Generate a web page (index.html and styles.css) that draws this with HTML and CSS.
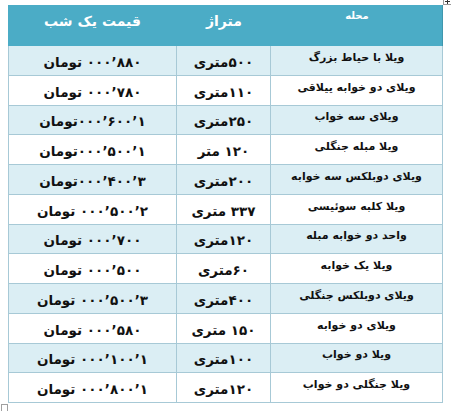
FILE: index.html
```html
<!DOCTYPE html>
<html lang="fa">
<head>
<meta charset="utf-8">
<link rel="stylesheet" href="styles.css">
</head>
<body>
<div class="page">
  <span class="move-handle"></span>
  <div class="table">
    <div class="row head">
      <div class="cell price"><span class="t">قیمت یک شب</span></div>
      <div class="cell area"><span class="t">متراژ</span></div>
      <div class="cell name small"><span class="t">محله</span></div>
    </div>
    <div class="row shade">
      <div class="cell price"><span class="t">۸۸۰’۰۰۰ تومان</span></div>
      <div class="cell area"><span class="t">۵۰۰متری</span></div>
      <div class="cell name"><span class="t">ویلا با حیاط بزرگ</span></div>
    </div>
    <div class="row">
      <div class="cell price"><span class="t">۷۸۰’۰۰۰ تومان</span></div>
      <div class="cell area"><span class="t">۱۱۰متری</span></div>
      <div class="cell name"><span class="t">ویلای دو خوابه ییلاقی</span></div>
    </div>
    <div class="row shade">
      <div class="cell price"><span class="t">۱’۶۰۰’۰۰۰تومان</span></div>
      <div class="cell area"><span class="t">۲۵۰متری</span></div>
      <div class="cell name"><span class="t">ویلای سه خواب</span></div>
    </div>
    <div class="row">
      <div class="cell price"><span class="t">۱’۵۰۰’۰۰۰تومان</span></div>
      <div class="cell area"><span class="t">۱۲۰ متر</span></div>
      <div class="cell name"><span class="t">ویلا مبله جنگلی</span></div>
    </div>
    <div class="row shade">
      <div class="cell price"><span class="t">۳’۴۰۰’۰۰۰تومان</span></div>
      <div class="cell area"><span class="t">۲۰۰متری</span></div>
      <div class="cell name"><span class="t">ویلای دوبلکس سه خوابه</span></div>
    </div>
    <div class="row">
      <div class="cell price"><span class="t">۲’۵۰۰’۰۰۰ تومان</span></div>
      <div class="cell area"><span class="t">۳۳۷ متری</span></div>
      <div class="cell name"><span class="t">ویلا کلبه سوئیسی</span></div>
    </div>
    <div class="row shade">
      <div class="cell price"><span class="t">۷۰۰’۰۰۰ تومان</span></div>
      <div class="cell area"><span class="t">۱۲۰متری</span></div>
      <div class="cell name"><span class="t">واحد دو خوابه مبله</span></div>
    </div>
    <div class="row">
      <div class="cell price"><span class="t">۵۰۰’۰۰۰ تومان</span></div>
      <div class="cell area"><span class="t">۶۰متری</span></div>
      <div class="cell name"><span class="t">ویلا یک خوابه</span></div>
    </div>
    <div class="row shade">
      <div class="cell price"><span class="t">۳’۵۰۰’۰۰۰ تومان</span></div>
      <div class="cell area"><span class="t">۴۰۰متری</span></div>
      <div class="cell name"><span class="t">ویلای دوبلکس جنگلی</span></div>
    </div>
    <div class="row">
      <div class="cell price"><span class="t">۵۸۰’۰۰۰ تومان</span></div>
      <div class="cell area"><span class="t">۱۵۰ متری</span></div>
      <div class="cell name"><span class="t">ویلای دو خوابه</span></div>
    </div>
    <div class="row shade">
      <div class="cell price"><span class="t">۱’۱۰۰’۰۰۰ تومان</span></div>
      <div class="cell area"><span class="t">۱۰۰متری</span></div>
      <div class="cell name"><span class="t">ویلا دو خواب</span></div>
    </div>
    <div class="row">
      <div class="cell price"><span class="t">۱’۸۰۰’۰۰۰ تومان</span></div>
      <div class="cell area"><span class="t">۱۲۰متری</span></div>
      <div class="cell name"><span class="t">ویلا جنگلی دو خواب</span></div>
    </div>
  </div>
  <span class="end-mark"></span>
</div>
</body>
</html>
```

FILE: styles.css
```css
html, body {
  margin: 0;
  padding: 0;
  background: #ffffff;
}

.page {
  position: relative;
  width: 451px;
  height: 411px;
  padding: 5px 0 0 8px;
  box-sizing: border-box;
  font-family: "DejaVu Sans", sans-serif;
  font-weight: bold;
  color: #111111;
}

.table {
  display: grid;
  grid-template-rows: 41px repeat(12, 29.75px);
  width: 435px;
}

.row {
  display: grid;
  grid-template-columns: 169px 94px 172px;
  background: #ffffff;
}

.row.shade {
  background: #dbeef4;
}

.row.head {
  background: #4bacc6;
  color: #ffffff;
  border-right: 1px solid #3f97ae;
  width: 435px;
  box-sizing: border-box;
}

.cell {
  display: flex;
  justify-content: center;
  align-items: center;
  box-sizing: border-box;
  border-right: 1px solid #a7c9d6;
  border-bottom: 1px solid #a7c9d6;
  white-space: nowrap;
}

.t {
  display: block;
  direction: rtl;
  unicode-bidi: isolate;
}

.cell.price {
  border-left: 1px solid #a7c9d6;
  font-size: 13.5px;
  padding-top: 3px;
}

.cell.area {
  font-size: 13.5px;
  padding-top: 3px;
}

.cell.name {
  font-size: 11px;
  padding-bottom: 6px;
}

.head .cell {
  border: none;
  font-size: 14px;
  padding: 0 0 10px 0;
}

.head .cell.small {
  font-size: 10px;
  padding: 0 0 20px 0;
}

.move-handle {
  position: absolute;
  top: -2px;
  left: 443px;
  width: 9px;
  height: 7px;
  border: 1px solid #9a9a9a;
  box-sizing: border-box;
  background: #ffffff;
}

.move-handle::before,
.move-handle::after {
  content: "";
  position: absolute;
  background: #333333;
}

.move-handle::before {
  left: 1px;
  top: 2px;
  width: 5px;
  height: 1px;
}

.move-handle::after {
  left: 3px;
  top: 0;
  width: 1px;
  height: 5px;
}

.end-mark {
  position: absolute;
  left: 1px;
  top: 404px;
  width: 7px;
  height: 8px;
  border: 1px solid #a0a0a0;
  box-sizing: border-box;
}
```
